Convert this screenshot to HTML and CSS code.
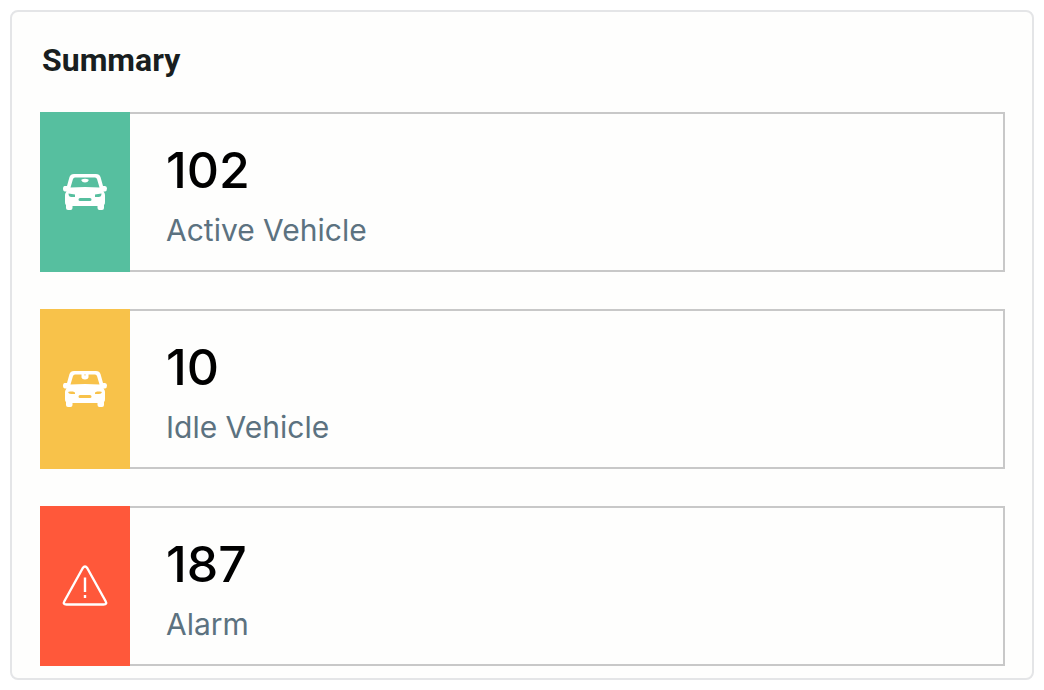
FILE: index.html
```html
<!DOCTYPE html>
<html lang="en">
<head>
<meta charset="utf-8">
<meta name="viewport" content="width=device-width, initial-scale=1">
<title>Summary</title>
<link rel="stylesheet" href="styles.css">
</head>
<body>
<svg class="sprite" aria-hidden="true">
  <symbol id="car-body" viewBox="0 0 44 36">
    <path fill="currentColor" fill-rule="evenodd" d="M11 0H33Q36.500 0 37.500 3L40 12H42Q44 12 44 14.500T42 17.500H40.500Q42 19 42 21V28Q42 31 41 31V34Q41 36 39 36H36.500Q34.500 36 34.500 34V32H9.500V34Q9.500 36 7.500 36H5Q3 36 3 34V31Q2 31 2 28V21Q2 19 3.500 17.500H2Q0 17.500 0 14.500T2 12H4L6.500 3Q7.500 0 11 0ZM12 3.500Q10.500 3.500 10 5L7.500 13.500Q22 12.500 36.500 13.500L34 5Q33.500 3.500 32 3.500ZM17 24Q15.500 24 15.500 25.500T17 27H27Q28.500 27 28.500 25.500T27 24Z"/>
  </symbol>
</svg>
<main class="panel">
  <h1 class="title">Summary</h1>
  <ul class="cards">
    <li class="card">
      <div class="badge badge-active">
        <svg class="car" viewBox="0 0 44 36" aria-hidden="true">
          <use href="#car-body"/>
          <path fill="currentColor" d="M18.500 5.500Q22 4 25.500 5.500V6.500Q25 8.500 22 8.500T18.500 6.500Z"/>
          <path class="lamp" d="M5.500 19.500L12 20.500V23H8.500Q5.500 23 5.500 19.500ZM38.500 19.500L32 20.500V23H35.500Q38.500 23 38.500 19.500Z"/>
        </svg>
      </div>
      <div class="body"><strong class="count">102</strong><span class="label">Active Vehicle</span></div>
    </li>
    <li class="card">
      <div class="badge badge-idle">
        <svg class="car" viewBox="0 0 44 36" aria-hidden="true">
          <use href="#car-body"/>
          <path fill="currentColor" d="M18.500 3H21L22 5L23 3H25.500V6.500Q25 8.500 22 8.500T18.500 6.500Z"/>
          <path class="lamp" d="M5 21L7 20.500H10L12 21.500V23H8Q5.500 23 5 21ZM39 21L37 20.500H34L32 21.500V23H36Q38.500 23 39 21Z"/>
        </svg>
      </div>
      <div class="body"><strong class="count">10</strong><span class="label">Idle Vehicle</span></div>
    </li>
    <li class="card">
      <div class="badge badge-alarm">
        <svg class="alarm" viewBox="0 0 46 42" fill="none" stroke="currentColor" stroke-width="2.400" aria-hidden="true">
          <path d="M20.800 3Q23 0 25.200 3L43.500 36Q45.500 39.500 41.500 39.500H4.500Q.5 39.500 2.500 36Z" stroke-linejoin="round"/>
          <path d="M23 12.500V27M23 30V33"/>
        </svg>
      </div>
      <div class="body"><strong class="count">187</strong><span class="label">Alarm</span></div>
    </li>
  </ul>
</main>
</body>
</html>
```
FILE: styles.css
```css
* {
  box-sizing: border-box;
}

body {
  margin: 0;
  padding: 10px;
  background: #fff;
  font-family: Inter, "Liberation Sans", sans-serif;
}

.sprite {
  display: none;
}

.panel {
  padding: 28px 27px 12px 28px;
  border: 2px solid #e4e5e7;
  border-radius: 8px;
  background: #fefefd;
}

.title {
  margin: 0 0 32px;
  padding-left: 2px;
  color: #191e20;
  font: 700 32px/40px Roboto, sans-serif;
}

.cards {
  display: grid;
  gap: 37px;
  margin: 0;
  padding: 0;
  list-style: none;
}

.card {
  display: flex;
}

.badge {
  display: flex;
  flex: 0 0 90px;
  align-items: center;
  justify-content: center;
  color: #fff;
}

.badge-active {
  background: #56bf9f;
}

.badge-idle {
  background: #f8c24a;
}

.badge-alarm {
  background: #ff583a;
}

.car {
  width: 44px;
  height: 36px;
}

.badge-active .lamp {
  fill: #56bf9f;
}

.badge-idle .lamp {
  fill: #f8c24a;
}

.alarm {
  width: 46px;
  height: 42px;
}

.body {
  display: flex;
  flex: 1;
  flex-direction: column;
  gap: 10px;
  padding: 26px 36px 20px;
  border: 2px solid #c8c8c8;
  border-left: 0;
}

.count {
  color: #000;
  font-size: 50px;
  font-weight: 500;
  line-height: 60px;
}

.label {
  color: #5c7280;
  font-size: 30px;
  line-height: 40px;
}
```
